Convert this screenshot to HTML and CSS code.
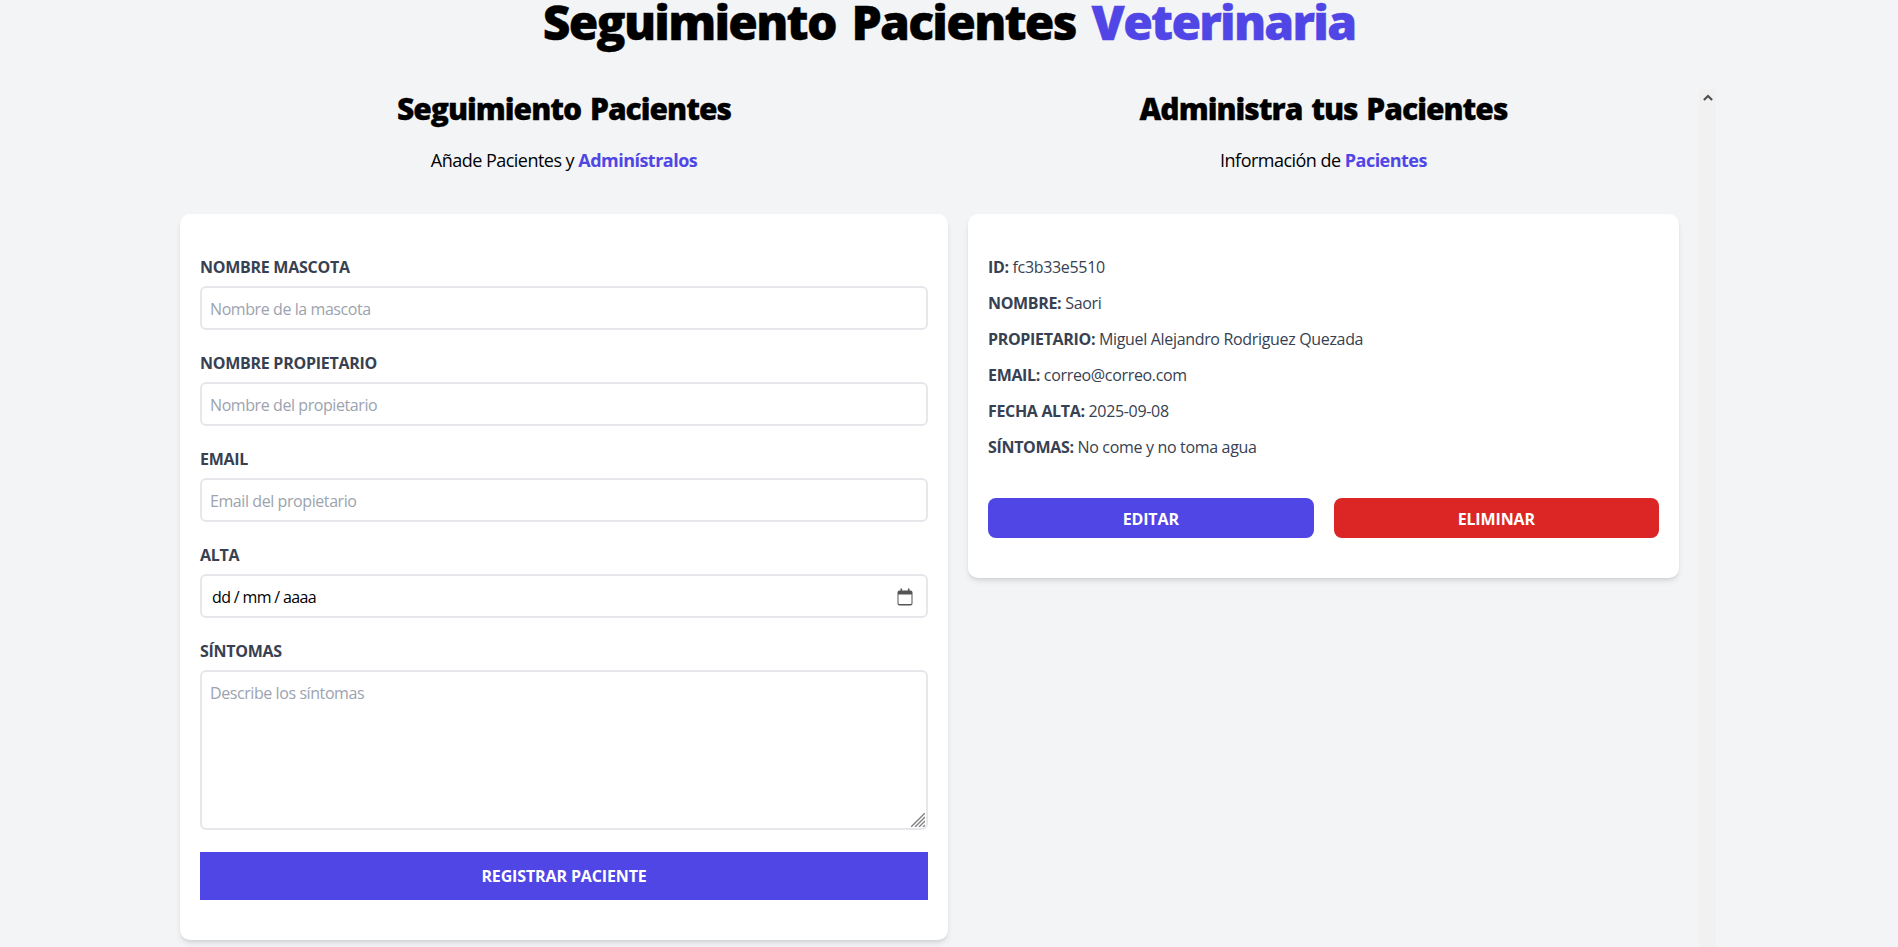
FILE: index.html
```html
<!DOCTYPE html>
<html lang="es">
<head>
    <meta charset="UTF-8">
    <meta name="viewport" content="width=device-width, initial-scale=1.0">
    <title>Seguimiento Pacientes Veterinaria</title>
    <link rel="stylesheet" href="styles.css">
</head>
<body>
    <h1 class="title">Seguimiento Pacientes <span class="accent">Veterinaria</span></h1>

    <div class="columns">
        <!-- Formulario -->
        <section class="col-form">
            <h2 class="col-title">Seguimiento Pacientes</h2>
            <p class="col-sub">Añade Pacientes y <span class="accent-bold">Adminístralos</span></p>

            <form class="card card-form">
                <div class="field">
                    <label for="mascota">Nombre Mascota</label>
                    <input id="mascota" class="input" type="text" placeholder="Nombre de la mascota">
                </div>
                <div class="field">
                    <label for="propietario">Nombre Propietario</label>
                    <input id="propietario" class="input" type="text" placeholder="Nombre del propietario">
                </div>
                <div class="field">
                    <label for="email">Email</label>
                    <input id="email" class="input" type="email" placeholder="Email del propietario">
                </div>
                <div class="field">
                    <label>Alta</label>
                    <div class="input input-date">
                        <span class="date-text">dd / mm / aaaa</span>
                        <svg class="icon-date" viewBox="0 0 16 18" width="16" height="18" aria-hidden="true">
                            <path d="M3.5 0.5h1.6v2h5.8v-2h1.6v2h1c1.1 0 2 .9 2 2v11c0 1.1-.9 2-2 2h-11c-1.1 0-2-.9-2-2v-11c0-1.1.9-2 2-2h1zM1.5 6.5v9c0 .3.2.5.5.5h12c.3 0 .5-.2.5-.5v-9z" fill="#555"/>
                        </svg>
                    </div>
                </div>
                <div class="field field-text">
                    <label for="sintomas">Síntomas</label>
                    <div class="textarea-wrap">
                        <textarea id="sintomas" class="input textarea" placeholder="Describe los síntomas"></textarea>
                        <svg class="grip" viewBox="0 0 14 14" width="14" height="14" aria-hidden="true">
                            <path d="M0 14 14 0M4 14 14 4M8 14 14 8M12 14 14 12" fill="none" stroke="#808080" stroke-width="1.4"/>
                        </svg>
                    </div>
                </div>
                <button type="button" class="btn-submit">Registrar Paciente</button>
            </form>
        </section>

        <!-- Listado -->
        <section class="col-list">
            <div class="col-list-inner">
                <h2 class="col-title">Administra tus Pacientes</h2>
                <p class="col-sub">Información de <span class="accent-bold">Pacientes</span></p>

                <div class="card card-patient">
                    <p class="row"><b>ID:</b> fc3b33e5510</p>
                    <p class="row"><b>Nombre:</b> Saori</p>
                    <p class="row"><b>Propietario:</b> Miguel Alejandro Rodriguez Quezada</p>
                    <p class="row"><b>Email:</b> correo@correo.com</p>
                    <p class="row"><b>Fecha Alta:</b> 2025-09-08</p>
                    <p class="row"><b>Síntomas:</b> No come y no toma agua</p>
                    <div class="actions">
                        <button type="button" class="btn btn-edit">Editar</button>
                        <button type="button" class="btn btn-delete">Eliminar</button>
                    </div>
                </div>
            </div>
            <div class="scroll-track">
                <svg viewBox="0 0 10 7" width="10" height="7" aria-hidden="true">
                    <path d="M0.9 6 5 2l4.1 4" fill="none" stroke="#505050" stroke-width="2.2"/>
                </svg>
            </div>
        </section>
    </div>
</body>
</html>
```

FILE: styles.css
```css
* {
    box-sizing: border-box;
}
html, body {
    height: 100%;
    overflow: hidden;
}
body {
    font-family: "Open Sans", "Noto Sans", sans-serif;
    background-color: #f3f4f6;
    margin: 0;
}
.title {
    font-size: 48px;
    line-height: 44px;
    font-weight: 800;
    letter-spacing: -1.75px;
    word-spacing: 5px;
    -webkit-text-stroke: 0.4px;
    text-align: center;
    color: #000;
    margin: 0;
}
.accent {
    color: #4f46e5;
}
.columns {
    display: flex;
    width: 1536px;
    margin: 45px 0 0 180px;
    height: 858px;
}
.col-form {
    width: 768px;
    flex: none;
}
.col-list {
    width: 768px;
    flex: none;
    display: flex;
}
.col-list-inner {
    flex: 1;
    min-width: 0;
}
.col-list .card {
    margin: 0 20px;
}
.col-title {
    font-size: 30px;
    line-height: 36px;
    font-weight: 800;
    letter-spacing: -1px;
    word-spacing: 2px;
    -webkit-text-stroke: 0.3px;
    text-align: center;
    color: #000;
    margin: 2px 0 0;
}
.col-sub {
    font-size: 18px;
    line-height: 28px;
    letter-spacing: -0.52px;
    text-align: center;
    color: #000;
    margin: 19px 0 40px;
}
.accent-bold {
    color: #4f46e5;
    font-weight: 700;
}
.card {
    background-color: #fff;
    border-radius: 10px;
    box-shadow: 0 4px 6px -1px rgba(0, 0, 0, 0.1), 0 2px 4px -2px rgba(0, 0, 0, 0.1);
    padding: 40px 20px;
}
.field {
    margin-bottom: 20px;
}
.field-text {
    margin-bottom: 22px;
}
.field label {
    display: block;
    font-size: 16px;
    line-height: 24px;
    font-weight: 700;
    letter-spacing: -0.27px;
    text-transform: uppercase;
    color: #374151;
    margin-bottom: 8px;
    position: relative;
    top: 1px;
}
.input {
    display: block;
    width: 100%;
    height: 44px;
    border: 2px solid #e5e7eb;
    border-radius: 6px;
    padding: 9px 8px 7px;
    font: inherit;
    font-size: 16px;
    line-height: 24px;
    letter-spacing: -0.42px;
    color: #000;
    background-color: #fff;
}
.input::placeholder {
    color: #9ca3af;
}
.input-date {
    display: flex;
    align-items: center;
    justify-content: space-between;
    padding: 9px 13px 7px 10px;
}
.date-text {
    letter-spacing: -0.65px;
}
.textarea-wrap {
    position: relative;
}
.textarea {
    height: 160px;
    resize: none;
}
.grip {
    position: absolute;
    right: 3px;
    bottom: 3px;
}
.btn-submit {
    display: block;
    width: 100%;
    height: 48px;
    border: 0;
    background-color: #4f46e5;
    color: #fff;
    font: inherit;
    font-size: 16px;
    font-weight: 700;
    letter-spacing: -0.13px;
    text-transform: uppercase;
    cursor: pointer;
}
.row {
    font-size: 16px;
    line-height: 24px;
    letter-spacing: -0.33px;
    color: #374151;
    margin: 0 0 12px;
    position: relative;
    top: 1px;
}
.row b {
    font-weight: 700;
    text-transform: uppercase;
}
.actions {
    display: flex;
    gap: 20px;
    margin-top: 40px;
}
.btn {
    flex: 1;
    height: 40px;
    border: 0;
    border-radius: 8px;
    padding-top: 2px;
    color: #fff;
    font: inherit;
    font-size: 16px;
    font-weight: 700;
    letter-spacing: -0.13px;
    text-transform: uppercase;
    cursor: pointer;
}
.btn-edit {
    background-color: #4f46e5;
}
.btn-delete {
    background-color: #dc2626;
}
.scroll-track {
    width: 17px;
    flex: none;
    background-color: #f1f1f1;
    display: flex;
    justify-content: center;
    padding-top: 5px;
}
```
